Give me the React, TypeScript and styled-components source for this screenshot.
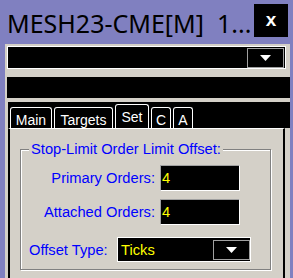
import React from 'react';
import styled, { createGlobalStyle } from 'styled-components';

const GlobalStyle = createGlobalStyle`
  html, body {
    margin: 0;
    padding: 0;
    background: #8080c0;
  }
  body {
    font-family: "Liberation Sans", Arial, sans-serif;
  }
`;

const Window = styled.div`
  width: 293px;
  height: 278px;
  background: #8080c0;
  display: flex;
  flex-direction: column;
  overflow: hidden;
`;

const TitleBar = styled.div`
  height: 44px;
  flex-shrink: 0;
  display: flex;
  align-items: flex-start;
  justify-content: space-between;
  padding: 0 5px 0 7px;
  box-sizing: border-box;
`;

const Title = styled.div`
  margin-top: 11px;
  font-family: "Noto Sans", "DejaVu Sans", sans-serif;
  font-size: 25px;
  line-height: 25px;
  color: #000;
  white-space: pre;
`;

const CloseButton = styled.div`
  margin-top: 4px;
  width: 34px;
  height: 33px;
  background: #000;
  color: #fff;
  display: flex;
  align-items: center;
  justify-content: center;
  font-size: 19px;
  font-weight: bold;
  line-height: 1;
  padding-bottom: 3px;
  box-sizing: border-box;
`;

const Body = styled.div`
  flex: 1;
  margin: 0 3px 0 5px;
  padding-top: 2px;
  background: #d4d0c8;
  display: flex;
  flex-direction: column;
`;

const Combo = styled.div<{ $width: number; $height: number }>`
  width: ${(p) => p.$width}px;
  height: ${(p) => p.$height}px;
  box-sizing: border-box;
  border: 1px solid #fff;
  background: #000;
  display: flex;
  align-items: center;
  justify-content: space-between;
  padding: 0 0 0 3px;
  flex-shrink: 0;
`;

const TopCombo = styled(Combo)`
  margin-left: 2px;
  justify-content: flex-end;
  padding-right: 1px;
`;

const DropButton = styled.div`
  width: 37px;
  height: 20px;
  box-sizing: border-box;
  border: 1px solid #a0a0a0;
  background: #000;
  display: flex;
  align-items: center;
  justify-content: center;
`;

const InfoBar = styled.div`
  margin: 8px 0 0 2px;
  height: 21px;
  background: #000;
  flex-shrink: 0;
`;

const TabStrip = styled.div`
  margin: 4px 0 0 3px;
  height: 26px;
  background: #000;
  display: flex;
  align-items: flex-end;
  gap: 2px;
  padding-left: 2px;
  flex-shrink: 0;
`;

const Tab = styled.div<{ $active?: boolean; $w: number }>`
  width: ${(p) => p.$w}px;
  height: ${(p) => (p.$active ? 24 : 21)}px;
  box-sizing: border-box;
  border: 1px solid #fff;
  border-bottom: none;
  border-radius: 3px 3px 0 0;
  color: #fff;
  font-size: 14px;
  line-height: 16px;
  padding-top: 4px;
  text-align: center;
`;

const Panel = styled.div`
  margin-left: 3px;
  width: 277px;
  flex: 1;
  box-sizing: border-box;
  border-top: 1px solid #fff;
  border-left: 2px solid #000;
  border-right: 2px solid #000;
  padding-left: 10px;
`;

const Group = styled.div`
  margin-top: 20px;
  width: 251px;
  height: 121px;
  box-sizing: border-box;
  border: 1px solid #808080;
  box-shadow: inset 1px 1px 0 #fff, 1px 1px 0 #fff;
  display: flex;
  flex-direction: column;
  align-items: flex-start;
`;

const Legend = styled.div`
  margin: -9px 0 0 8px;
  padding: 0 2px;
  background: #d4d0c8;
  color: #0000ff;
  font-size: 14.7px;
  line-height: 16px;
`;

const Row = styled.div<{ $top: number }>`
  margin-top: ${(p) => p.$top}px;
  display: flex;
  align-items: center;
`;

const Label = styled.div<{ $width: number; $right?: boolean; $indent?: number }>`
  width: ${(p) => p.$width}px;
  margin-left: ${(p) => p.$indent || 0}px;
  text-align: ${(p) => (p.$right ? 'right' : 'left')};
  color: #0000ff;
  font-size: 14.7px;
  line-height: 16px;
  white-space: nowrap;
`;

const Field = styled.div`
  margin-left: 5px;
  width: 80px;
  height: 26px;
  box-sizing: border-box;
  border: 1px solid;
  border-color: #a0a0a0 #fff #fff #a0a0a0;
  background: #000;
  color: #ffff00;
  font-size: 14.7px;
  line-height: 24px;
  padding-left: 1px;
`;

const ComboText = styled.span`
  color: #ffff00;
  font-size: 14.7px;
  line-height: 16px;
`;

const Arrow = () => (
  <svg width="11" height="6" viewBox="0 0 11 6">
    <polygon points="0,0 11,0 5.5,6" fill="#fff" />
  </svg>
);

const tabs = [
  { name: 'Main', w: 42 },
  { name: 'Targets', w: 59 },
  { name: 'Set', w: 34, active: true },
  { name: 'C', w: 20 },
  { name: 'A', w: 20 },
];

export default function App() {
  return (
    <>
      <GlobalStyle />
      <Window>
        <TitleBar>
          <Title>{'MESH23-CME[M]  1...'}</Title>
          <CloseButton>x</CloseButton>
        </TitleBar>
        <Body>
          <TopCombo $width={279} $height={23}>
            <DropButton>
              <Arrow />
            </DropButton>
          </TopCombo>
          <InfoBar />
          <TabStrip>
            {tabs.map((t) => (
              <Tab key={t.name} $w={t.w} $active={t.active}>
                {t.name}
              </Tab>
            ))}
          </TabStrip>
          <Panel>
            <Group>
              <Legend>Stop-Limit Order Limit Offset:</Legend>
              <Row $top={8}>
                <Label $width={134} $right>
                  Primary Orders:
                </Label>
                <Field>4</Field>
              </Row>
              <Row $top={8}>
                <Label $width={134} $right>
                  Attached Orders:
                </Label>
                <Field>4</Field>
              </Row>
              <Row $top={12}>
                <Label $width={88} $indent={8}>
                  Offset Type:
                </Label>
                <Combo $width={134} $height={25}>
                  <ComboText>Ticks</ComboText>
                  <DropButton>
                    <Arrow />
                  </DropButton>
                </Combo>
              </Row>
            </Group>
          </Panel>
        </Body>
      </Window>
    </>
  );
}
